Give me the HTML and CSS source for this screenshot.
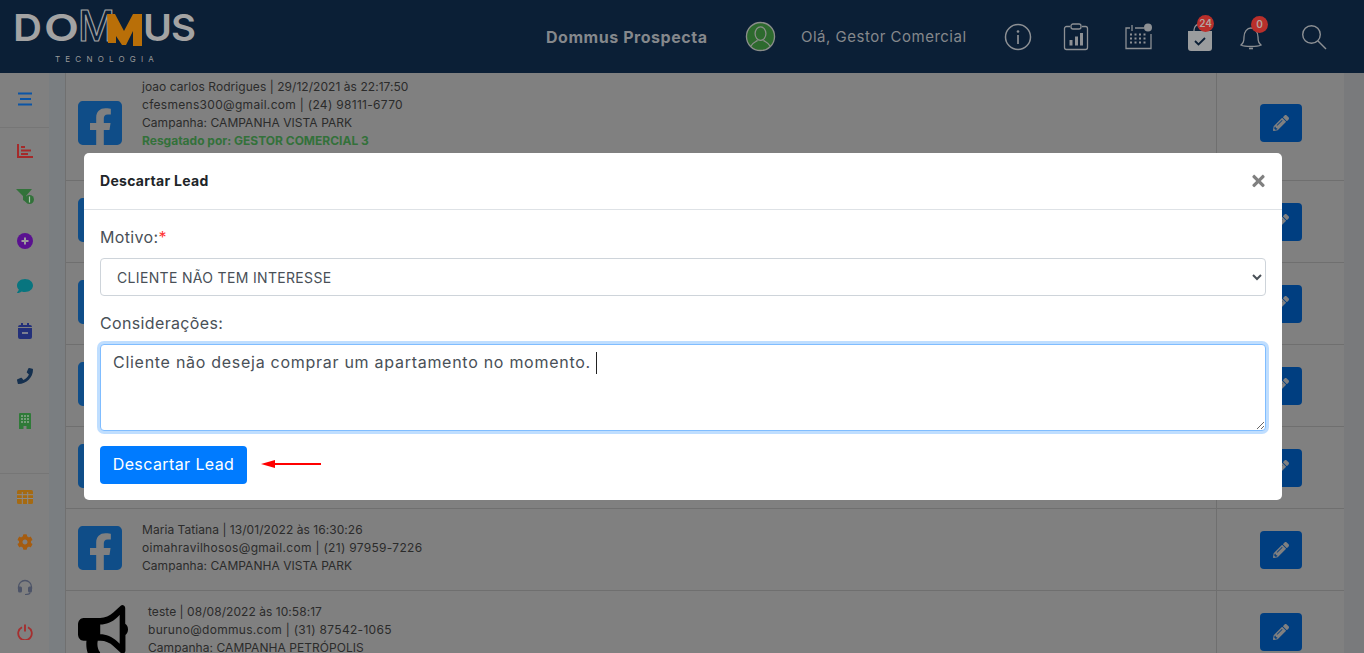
FILE: index.html
```html
<!DOCTYPE html>
<html lang="pt-BR">
<head>
<meta charset="utf-8">
<title>Dommus Prospecta</title>
<link rel="stylesheet" href="styles.css">
</head>
<body>
<header class="topbar">
  <svg class="logo" viewBox="0 0 200 73" width="200" height="73" role="img" aria-label="Dommus Tecnologia">
    <text x="13" y="41" class="logo-big" textLength="29" lengthAdjust="spacingAndGlyphs">D</text>
    <text x="44" y="41" class="logo-big" textLength="35" lengthAdjust="spacingAndGlyphs">O</text>
    <text x="78" y="41" class="logo-tall" textLength="37" lengthAdjust="spacingAndGlyphs">M</text>
    <path d="M108 43V32l-1-18h8l9 17 9-17h9v32h-9V31l-7 14h-4l-6-9v7z" fill="#b96f08"/>
    <text x="143" y="41" class="logo-big" textLength="29" lengthAdjust="spacingAndGlyphs">U</text>
    <text x="171" y="41" class="logo-big" textLength="25" lengthAdjust="spacingAndGlyphs">S</text>
    <text x="55" y="62" class="logo-small">TECNOLOGIA</text>
  </svg>
  <div class="brand-name">Dommus Prospecta</div>
  <svg class="avatar" viewBox="0 0 32 32" width="31" height="31">
    <circle cx="16" cy="16" r="14.5" fill="#2d6a2e" stroke="#8a8d8a" stroke-width="1.4"/>
    <ellipse cx="16" cy="13" rx="5.6" ry="7" fill="none" stroke="#8a8d8a" stroke-width="1.3"/>
    <path d="M6 26c2-4 5-4.500 7-6M26 26c-2-4-5-4.500-7-6" fill="none" stroke="#8a8d8a" stroke-width="1.3"/>
  </svg>
  <div class="greeting">Olá, Gestor Comercial</div>
  <nav class="top-icons">
    <svg class="ti ti-info" viewBox="0 0 28 28" width="28" height="28"><circle cx="14" cy="14" r="12.500" fill="none" stroke="#8d9094" stroke-width="1.5"/><circle cx="14" cy="8.500" r="1.300" fill="#8d9094"/><path d="M14 12v9" stroke="#8d9094" stroke-width="1.700"/></svg>
    <svg class="ti ti-clip" viewBox="0 0 26 28" width="26" height="28"><path d="M7 3.500H3.500a2 2 0 0 0-2 2v19a2 2 0 0 0 2 2h19a2 2 0 0 0 2-2v-19a2 2 0 0 0-2-2H19" fill="none" stroke="#8d9094" stroke-width="1.300"/><rect x="8" y="1" width="10" height="5" rx="2" fill="none" stroke="#8d9094" stroke-width="1.300"/><rect x="6.500" y="17" width="3" height="5.500" fill="#8d9094"/><rect x="12" y="13.500" width="3" height="9" fill="#8d9094"/><rect x="17" y="10" width="3" height="12.500" fill="#8d9094"/></svg>
    <svg class="ti ti-cal" viewBox="0 0 30 28" width="30" height="28"><path d="M6 5H2v20.500h25V11M11 5h9" fill="none" stroke="#8d9094" stroke-width="1.300"/><path d="M8 2v6" stroke="#8d9094" stroke-width="1.300"/><circle cx="24" cy="4.500" r="4" fill="#8d9094"/><path d="M6 11.500h17M6 15.500h17M6 19.500h17" stroke="#8d9094" stroke-width="1.800" stroke-dasharray="2 2.500"/></svg>
    <div class="ti-badged ti-task">
      <svg viewBox="0 0 26 28" width="26" height="28"><path d="M7 8V6a6 6 0 0 1 12 0v2" fill="none" stroke="#8d9094" stroke-width="1.300"/><path d="M1 7h24v17a3 3 0 0 1-3 3H4a3 3 0 0 1-3-3z" fill="#9a9c9e"/><path d="M8 17l3.500 3.500L18 14" fill="none" stroke="#0b1f36" stroke-width="1.800"/></svg>
      <span class="badge">24</span>
    </div>
    <div class="ti-badged ti-bell">
      <svg viewBox="0 0 24 26" width="24" height="26"><path d="M2 20c2-2 3-3 3-8s3-9 7-9 7 4 7 9 1 6 3 8c-4 2-16 2-20 0z" fill="none" stroke="#8d9094" stroke-width="1.300"/><path d="M10 23.500h4" stroke="#8d9094" stroke-width="1.600"/></svg>
      <span class="badge">0</span>
    </div>
    <svg class="ti ti-search" viewBox="0 0 26 26" width="26" height="26"><circle cx="10.500" cy="10.500" r="8.800" fill="none" stroke="#8d9094" stroke-width="1.400"/><path d="M17 17l8 8" stroke="#8d9094" stroke-width="1.500"/></svg>
  </nav>
</header>

<div class="layout">
  <aside class="sidebar">
    <div class="side-head">
      <svg viewBox="0 0 16 14" width="16" height="14"><path d="M1 1.500h14M3 7h11M1 12.500h14" stroke="#0b55a6" stroke-width="2"/></svg>
    </div>
    <div class="side-list">
      <div class="side-item"><svg viewBox="0 0 16 14" width="16" height="14"><path d="M1 0v13h15M4 3h4M4 6.500h10M4 10h7" fill="none" stroke="#a52a2a" stroke-width="2"/></svg></div>
      <div class="side-item"><svg viewBox="0 0 18 16" width="18" height="16"><path d="M0 1h16L10 8v6l-3-2V8z" fill="#32723a"/><circle cx="13.500" cy="11.500" r="4.500" fill="#32723a"/><path d="M13.500 8.500v6" stroke="#a9c4ab" stroke-width="1.200"/></svg></div>
      <div class="side-item"><svg viewBox="0 0 16 16" width="16" height="16"><circle cx="8" cy="8" r="8" fill="#5a1190"/><path d="M8 4.500v7M4.500 8h7" stroke="#9c9c9c" stroke-width="2"/></svg></div>
      <div class="side-item"><svg viewBox="0 0 512 512" width="16" height="16"><path fill="#08757f" d="M256 32C114.600 32 0 125.100 0 240c0 49.600 21.400 95 57 130.700C44.500 421.100 2.700 466 2.200 466.500c-2.200 2.300-2.800 5.700-1.500 8.700S4.800 480 8 480c66.300 0 116-31.800 140.600-51.400 32.700 12.300 69 19.400 107.400 19.400 141.400 0 256-93.100 256-208S397.400 32 256 32z"/></svg></div>
      <div class="side-item"><svg viewBox="0 0 14 16" width="14" height="16"><path d="M0 5h14v9a2 2 0 0 1-2 2H2a2 2 0 0 1-2-2zM2 2h1V0h2v2h4V0h2v2h1a2 2 0 0 1 2 2H0a2 2 0 0 1 2-2z" fill="#23307a"/><path d="M4 10h6" stroke="#9a9a9a" stroke-width="1.500"/></svg></div>
      <div class="side-item"><svg viewBox="0 0 512 512" width="16" height="16"><path fill="#15304f" d="M493.400 24.600l-104-24c-11.300-2.600-22.900 3.300-27.500 13.900l-48 112c-4.200 9.800-1.400 21.300 6.900 28l60.600 49.600c-36 76.700-98.900 140.500-177.200 177.200l-49.600-60.600c-6.800-8.300-18.200-11.100-28-6.900l-112 48C3.900 366.500-2 378.100.6 389.400l24 104C27.100 504.200 36.700 512 48 512c256.100 0 464-207.500 464-464 0-11.200-7.700-20.900-18.600-23.400z"/></svg></div>
      <div class="side-item"><svg viewBox="0 0 12 16" width="12" height="16"><path d="M1 0h10a1 1 0 0 1 1 1v15H7.500v-3h-3v3H0V1a1 1 0 0 1 1-1z" fill="#2f7a38"/><path d="M2 3h8M2 6h8M2 9h8" stroke="#8ea890" stroke-width="1.300" stroke-dasharray="2 1"/></svg></div>
    </div>
    <div class="side-foot">
      <div class="side-item"><svg viewBox="0 0 16 14" width="16" height="14"><rect width="16" height="14" rx="1.500" fill="#a56a12"/><path d="M0 4.700h16M0 8.500h16M5.300 2v12M10.700 2v12" stroke="#8a8a8a" stroke-width="1"/></svg></div>
      <div class="side-item"><svg viewBox="0 0 512 512" width="16" height="16"><path fill="#a55c10" d="M487.400 315.700l-42.600-24.600c4.300-23.200 4.300-47 0-70.200l42.600-24.600c4.900-2.800 7.100-8.600 5.500-14-11.100-35.600-30-67.800-54.700-94.600-3.800-4.100-10-5.100-14.800-2.300L380.800 110c-17.900-15.400-38.500-27.300-60.800-35.100V25.800c0-5.600-3.900-10.500-9.400-11.700-36.700-8.200-74.300-7.800-109.200 0-5.500 1.200-9.400 6.100-9.400 11.700V75c-22.200 7.900-42.800 19.800-60.800 35.100L88.700 85.500c-4.900-2.800-11-1.900-14.800 2.300-24.700 26.700-43.600 58.900-54.700 94.600-1.700 5.400.6 11.200 5.500 14L67.300 221c-4.300 23.200-4.300 47 0 70.200l-42.600 24.600c-4.900 2.800-7.100 8.600-5.500 14 11.100 35.600 30 67.800 54.700 94.600 3.800 4.100 10 5.100 14.800 2.300l42.600-24.600c17.900 15.400 38.500 27.300 60.800 35.100v49.200c0 5.600 3.900 10.500 9.400 11.700 36.700 8.200 74.300 7.800 109.200 0 5.500-1.200 9.400-6.100 9.400-11.700v-49.200c22.200-7.900 42.800-19.800 60.800-35.100l42.600 24.600c4.900 2.800 11 1.900 14.800-2.300 24.700-26.700 43.600-58.900 54.700-94.600 1.500-5.500-.7-11.300-5.600-14.100zM256 336c-44.100 0-80-35.900-80-80s35.900-80 80-80 80 35.900 80 80-35.900 80-80 80z"/></svg></div>
      <div class="side-item"><svg viewBox="0 0 16 16" width="16" height="16"><path d="M1.500 10V8a6.500 6.500 0 0 1 13 0v2" fill="none" stroke="#4d5468" stroke-width="1.300"/><rect x="1" y="7.500" width="4" height="6" rx="1.500" fill="#4d5468"/><rect x="11" y="7.500" width="4" height="6" rx="1.500" fill="#4d5468"/><path d="M13 13.500c0 1.500-2 2-5 2" fill="none" stroke="#4d5468" stroke-width="1.200"/></svg></div>
      <div class="side-item"><svg viewBox="0 0 16 16" width="16" height="16"><path d="M5 3.300a6.800 6.800 0 1 0 6 0" fill="none" stroke="#a52f2f" stroke-width="1.800"/><path d="M8 0.500v7" stroke="#a52f2f" stroke-width="1.900"/></svg></div>
    </div>
  </aside>
  <div class="gutter"></div>

  <main class="list">
    <section class="row row-first">
      <div class="cell-main">
        <svg class="fb" viewBox="0 32 448 448"><use href="#fb-shape"/></svg>
        <div class="lead">
          <p class="l-name">joao carlos Rodrigues | 29/12/2021 às 22:17:50</p>
          <p class="l-mail">cfesmens300@gmail.com | (24) 98111-6770</p>
          <p>Campanha: CAMPANHA VISTA PARK</p>
          <p class="rescued">Resgatado por: GESTOR COMERCIAL 3</p>
        </div>
      </div>
      <div class="cell-action"><button class="edit"><svg viewBox="0 0 512 512"><use href="#pencil"/></svg></button></div>
    </section>
    <section class="row"><div class="cell-main"><svg class="fb" viewBox="0 32 448 448"><use href="#fb-shape"/></svg></div><div class="cell-action"><button class="edit"><svg viewBox="0 0 512 512"><use href="#pencil"/></svg></button></div></section>
    <section class="row"><div class="cell-main"><svg class="fb" viewBox="0 32 448 448"><use href="#fb-shape"/></svg></div><div class="cell-action"><button class="edit"><svg viewBox="0 0 512 512"><use href="#pencil"/></svg></button></div></section>
    <section class="row"><div class="cell-main"><svg class="fb" viewBox="0 32 448 448"><use href="#fb-shape"/></svg></div><div class="cell-action"><button class="edit"><svg viewBox="0 0 512 512"><use href="#pencil"/></svg></button></div></section>
    <section class="row"><div class="cell-main"><svg class="fb" viewBox="0 32 448 448"><use href="#fb-shape"/></svg></div><div class="cell-action"><button class="edit"><svg viewBox="0 0 512 512"><use href="#pencil"/></svg></button></div></section>
    <section class="row">
      <div class="cell-main">
        <svg class="fb" viewBox="0 32 448 448"><use href="#fb-shape"/></svg>
        <div class="lead">
          <p class="l-name">Maria Tatiana | 13/01/2022 às 16:30:26</p>
          <p class="l-mail">oimahravilhosos@gmail.com | (21) 97959-7226</p>
          <p>Campanha: CAMPANHA VISTA PARK</p>
        </div>
      </div>
      <div class="cell-action"><button class="edit"><svg viewBox="0 0 512 512"><use href="#pencil"/></svg></button></div>
    </section>
    <section class="row">
      <div class="cell-main">
        <svg class="horn" viewBox="0 0 576 512" preserveAspectRatio="none"><path d="M576 240c0-23.630-12.950-44.040-32-55.120V32.010C544 23.260 537.020 0 512 0c-7.120 0-14.190 2.380-19.980 7.020l-85.030 68.030C364.280 109.190 310.660 128 256 128H64c-35.350 0-64 28.650-64 64v96c0 35.350 28.650 64 64 64h33.700c-1.390 10.480-2.180 21.140-2.180 32 0 39.770 9.260 77.350 25.560 110.940 5.190 10.690 16.520 17.060 28.400 17.060h74.280c26.050 0 41.690-29.840 25.900-50.560-16.400-21.520-26.150-48.360-26.150-77.440 0-11.110 1.620-21.790 4.290-32h30.890c54.660 0 108.280 18.810 150.980 52.950l85.030 68.030a32.023 32.023 0 0 0 19.980 7.020c24.920 0 32-22.780 32-32V295.130C563.050 284.040 576 263.630 576 240zm-96 141.420l-33.050-26.440C392.950 311.780 325.120 288 256 288v-96c69.120 0 136.950-23.780 190.950-66.980L480 98.580v282.840z"/></svg>
        <div class="lead">
          <p class="l-name">teste | 08/08/2022 às 10:58:17</p>
          <p class="l-mail">buruno@dommus.com | (31) 87542-1065</p>
          <p>Campanha: CAMPANHA PETRÓPOLIS</p>
        </div>
      </div>
      <div class="cell-action"><button class="edit"><svg viewBox="0 0 512 512"><use href="#pencil"/></svg></button></div>
    </section>
  </main>
  <div class="rail"></div>
</div>

<div class="modal" role="dialog" aria-labelledby="modal-title">
  <div class="modal-head">
    <h2 id="modal-title">Descartar Lead</h2>
    <svg class="close" viewBox="0 0 352 512" width="13" height="18"><path d="M242.720 256l100.070-100.070c12.280-12.280 12.280-32.190 0-44.480l-22.240-22.240c-12.280-12.280-32.190-12.280-44.480 0L176 189.280 75.930 89.210c-12.280-12.280-32.190-12.280-44.480 0L9.210 111.450c-12.280 12.280-12.280 32.190 0 44.480L109.280 256 9.210 356.070c-12.280 12.280-12.280 32.190 0 44.480l22.240 22.240c12.280 12.280 32.200 12.280 44.480 0L176 322.720l100.070 100.070c12.280 12.280 32.200 12.280 44.480 0l22.240-22.240c12.280-12.280 12.280-32.190 0-44.480L242.720 256z"/></svg>
  </div>
  <form class="modal-body">
    <label class="field-label" for="motivo">Motivo:<span class="req">*</span></label>
    <select class="field-select" id="motivo"><option>CLIENTE NÃO TEM INTERESSE</option></select>
    <label class="field-label label-2" for="cons">Considerações:</label>
    <div class="area-wrap">
      <textarea class="field-area" id="cons">Cliente não deseja comprar um apartamento no momento. </textarea>
      <span class="caret"></span>
    </div>
    <div class="actions">
      <button type="button" class="primary">Descartar Lead</button>
      <svg class="arrow" viewBox="0 0 60 10" width="60" height="10"><path d="M0 5l14-4v3h46v2H14v3z" fill="#f00"/></svg>
    </div>
  </form>
</div>

<svg class="defs" width="0" height="0" aria-hidden="true">
  <defs>
    <path id="fb-shape" d="M400 32H48A48 48 0 0 0 0 80v352a48 48 0 0 0 48 48h137.250V327.690h-63V256h63v-54.640c0-62.150 37-96.480 93.670-96.480 27.140 0 55.520 4.840 55.520 4.840v61h-31.270c-30.810 0-40.420 19.120-40.420 38.730V256h68.780l-11 71.690h-57.780V480H400a48 48 0 0 0 48-48V80a48 48 0 0 0-48-48z"/>
    <path id="pencil" d="M497.900 142.100l-46.100 46.100c-4.700 4.700-12.300 4.700-17 0l-111-111c-4.700-4.700-4.700-12.300 0-17l46.100-46.100c18.700-18.700 49.100-18.700 67.900 0l60.100 60.100c18.800 18.700 18.800 49.100 0 67.900zM284.200 99.800L21.600 362.400.4 483.900c-2.900 16.400 11.400 30.600 27.800 27.800l121.500-21.300 262.600-262.600c4.700-4.700 4.700-12.300 0-17l-111-111c-4.800-4.700-12.400-4.700-17.100 0zM124.100 339.900c-5.500-5.500-5.500-14.300 0-19.800l154-154c5.500-5.500 14.300-5.500 19.800 0s5.500 14.300 0 19.800l-154 154c-5.500 5.500-14.300 5.500-19.800 0zM88 424h48v36.300l-64.500 11.300-31.100-31.100L51.700 376H88v48z"/>
  </defs>
</svg>
</body>
</html>
```
FILE: styles.css
```css
* { box-sizing: border-box; }
html, body { margin: 0; height: 653px; overflow: hidden; }
body { font-family: Inter, "Open Sans", sans-serif; background: #808080; color: #2b2b2b; }

.topbar { height: 73px; background: #0b1f36; display: flex; align-items: center; color: #85888c; }
.logo { flex: none; align-self: flex-start; }
.logo-big { font: 600 37px Inter, sans-serif; fill: #a3a3a3; }
.logo-tall { font: 500 42px Inter, sans-serif; fill: none; stroke: #a3a3a3; stroke-width: 1.200; }
.logo-small { font: 400 8px Inter, sans-serif; letter-spacing: 5.200px; fill: #9a9a9a; }
.brand-name { margin-left: 346px; width: 162px; font-size: 16px; font-weight: 700; white-space: nowrap; letter-spacing: .55px; }
.avatar { margin-left: 37px; flex: none; }
.greeting { margin-left: 25px; width: 165px; font-size: 15px; white-space: nowrap; letter-spacing: .5px; }
.top-icons { margin-left: 38px; display: flex; align-items: center; }
.ti, .ti-badged { flex: none; }
.ti-badged { position: relative; display: flex; }
.ti-clip { margin-left: 31px; }
.ti-cal { margin-left: 35px; }
.ti-task { margin-left: 33px; margin-top: 2px; }
.ti-bell { margin-left: 26px; margin-top: 2px; }
.ti-search { margin-left: 38px; }
.badge { position: absolute; top: -9px; left: 10px; width: 17px; height: 17px; border-radius: 50%; background: #b92f2b; color: #b5a5a0; font-size: 10px; font-weight: 600; line-height: 17px; text-align: center; }
.ti-bell .badge { top: -9px; left: 12px; }

.layout { display: flex; height: 580px; overflow: hidden; }
.sidebar { width: 49px; flex: none; display: flex; flex-direction: column; background: #808080; }
.side-head { height: 55px; flex: none; display: flex; align-items: center; justify-content: center; padding-bottom: 2px; border-bottom: 1px solid #767676; }
.side-list { flex: 0 0 345px; }
.side-foot { flex: none; border-top: 1px solid #767676; }
.side-item { height: 45px; display: flex; align-items: center; justify-content: center; }
.gutter { width: 17px; flex: none; background: #7a7e81; border-right: 1px solid #707070; }

.list { flex: 1; min-width: 0; margin-top: -7px; }
.row { height: 82px; display: flex; border-bottom: 1px solid #6f6f6f; }
.row-first { height: 115px; }
.cell-main { flex: 1; min-width: 0; display: flex; align-items: flex-start; padding: 12px 0 0 12px; border-right: 1px solid #6f6f6f; }
.cell-action { width: 127px; flex: none; display: flex; align-items: center; justify-content: center; }
.fb { width: 44px; height: 44px; flex: none; margin-top: 5px; fill: #0f4d88; }
.row-first .fb { margin-top: 23px; }
.horn { width: 50px; height: 52px; flex: none; margin-top: 2px; fill: #000; }
.lead { margin-left: 20px; font-size: 12px; line-height: 18px; letter-spacing: .05px; color: #2b2b2b; white-space: nowrap; }
.lead p { margin: 0; }
.lead .l-name { letter-spacing: .05px; }
.lead .l-mail { letter-spacing: .3px; }
.rescued { color: #33713a; font-weight: 700; letter-spacing: 0; }
.edit { width: 42px; height: 38px; padding: 0; border: 0; border-radius: 4px; background: #003e80; display: flex; align-items: center; justify-content: center; }
.edit svg { width: 16px; height: 16px; fill: #808080; }
.rail { width: 20px; flex: none; background: #797a7c; }

.modal { position: fixed; top: 153px; left: 84px; width: 1198px; height: 347px; background: #fff; border-radius: 5px; color: #495057; }
.modal-head { height: 57px; display: flex; align-items: center; justify-content: space-between; padding: 0 17px 1px 16px; border-bottom: 1px solid #dee2e6; }
.modal-head h2 { margin: 0; font-size: 14px; font-weight: 700; color: #212529; letter-spacing: .3px; }
.close { fill: #808080; }
.modal-body { padding: 15px 16px 16px; }
.field-label { display: block; height: 24px; margin-bottom: 9px; font-size: 16px; line-height: 24px; color: #495057; letter-spacing: .35px; }
.label-2 { margin-top: 15px; }
.req { color: #f33; }
.field-select { display: block; width: 1166px; height: 38px; padding: 0 12px; border: 1px solid #ced4da; border-radius: 4px; background: #fff; color: #495057; font: 400 14px Inter, sans-serif; letter-spacing: .33px; }
.area-wrap { position: relative; width: 1166px; height: 87px; }
.field-area { display: block; width: 100%; height: 100%; padding: 5px 12px; border: 1px solid #80bdff; border-radius: 4px; outline: 0; box-shadow: 0 0 0 3px rgba(0,123,255,.25); color: #495057; font: 400 16px/24px Inter, sans-serif; letter-spacing: .72px; }
.caret { position: absolute; left: 496px; top: 8px; width: 1px; height: 22px; background: #222; }
.actions { display: flex; align-items: center; margin-top: 15px; }
.primary { width: 147px; height: 38px; padding: 0 0 2px; border: 0; border-radius: 4px; background: #007bff; color: #fff; font: 400 16px Inter, sans-serif; letter-spacing: .4px; }
.arrow { margin-left: 14px; margin-top: -3px; }
.defs { position: absolute; }
```
